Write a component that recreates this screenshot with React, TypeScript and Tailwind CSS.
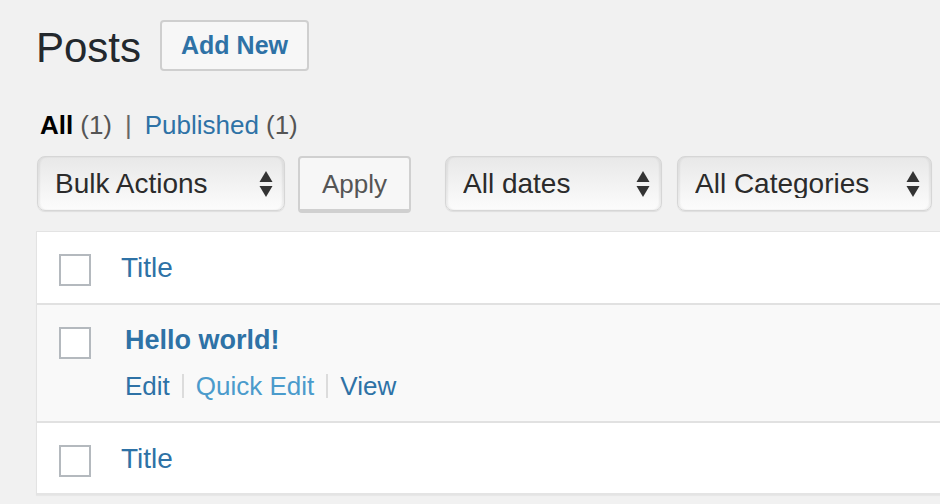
import type { ReactNode } from "react";

const FONT = { fontFamily: '"Liberation Sans", Arial, sans-serif' };

function Arrows() {
  return (
    <svg width="14" height="26" viewBox="0 0 14 26" className="pointer-events-none absolute right-[12px] top-1/2 -translate-y-1/2">
      <path d="M7 0 L13.5 11 L0.5 11 Z" fill="#333" />
      <path d="M7 26 L13.5 15 L0.5 15 Z" fill="#333" />
    </svg>
  );
}

function NativeSelect({ width, label }: { width: string; label: string }) {
  return (
    <div className={`relative h-[55px] ${width}`}>
      <select
        defaultValue={label}
        className="h-full w-full appearance-none rounded-[8px] border border-[#d6d6d6] bg-linear-to-b from-[#e8e8e8] via-[#f2f2f2] to-[#fcfcfc] pl-[17px] pr-[36px] text-[28px] leading-none text-[#2b2b2b] shadow-[inset_2px_0_2px_rgba(0,0,0,0.06),inset_-2px_0_2px_rgba(0,0,0,0.06),0_1px_1px_rgba(0,0,0,0.08)] outline-none"
        style={FONT}
      >
        <option value={label}>{label}</option>
      </select>
      <Arrows />
    </div>
  );
}

function Checkbox() {
  return (
    <input
      type="checkbox"
      className="h-[32px] w-[32px] shrink-0 appearance-none border-2 border-[#b4b9be] bg-white"
    />
  );
}

function Row({ children, className }: { children: ReactNode; className: string }) {
  return <div className={`flex items-start pl-[22px] ${className}`}>{children}</div>;
}

export default function App() {
  return (
    <div className="h-[504px] w-full overflow-hidden bg-[#f1f1f1]" style={FONT}>
      <div className="flex items-start gap-[19px] pl-[36px] pt-[20px]">
        <h1 className="mt-[7px] text-[42px] font-normal leading-none text-[#23282d]">Posts</h1>
        <button className="flex h-[51px] items-center rounded-[4px] border-2 border-[#cfcfcf] bg-[#f7f7f7] px-[19px] text-[25px] font-bold leading-none text-[#2e72a6]">
          Add New
        </button>
      </div>

      <ul className="mt-[41px] flex items-center pl-[40px] text-[26px] leading-none text-[#555]">
        <li>
          <span className="font-bold text-black">All</span>
          <span className="ml-[7px]">(1)</span>
        </li>
        <li className="mx-[13px] text-[#666]">|</li>
        <li>
          <a className="text-[#2e72a6]">Published</a>
          <span className="ml-[7px]">(1)</span>
        </li>
      </ul>

      <div className="mt-[18px] flex items-start pl-[37px]">
        <NativeSelect width="w-[248px]" label="Bulk Actions" />
        <button className="ml-[13px] h-[57px] w-[113px] rounded-[4px] border-2 border-[#d0d0d0] border-b-[4px] bg-[#f7f7f7] text-[26px] leading-none text-[#555]">
          Apply
        </button>
        <NativeSelect width="ml-[34px] w-[217px]" label="All dates" />
        <NativeSelect width="ml-[15px] w-[255px]" label="All Categories" />
      </div>

      <div className="ml-[36px] mt-[18px] border-l border-t border-[#e3e3e3] bg-white shadow-[0_1px_1px_rgba(0,0,0,0.04)]">
        <Row className="h-[71px] pt-[22px]">
          <Checkbox />
          <a className="ml-[30px] text-[28px] leading-none text-[#2e72a6]">Title</a>
        </Row>
        <Row className="h-[120px] border-y-2 border-[#e1e1e1] bg-[#f9f9f9] pt-[22px]">
          <Checkbox />
          <div className="ml-[34px] flex flex-col">
            <a className="text-[27px] font-bold leading-none text-[#2e72a6]">Hello world!</a>
            <div className="mt-[19px] flex items-center text-[26px] leading-none">
              <a className="text-[#2e72a6]">Edit</a>
              <span className="mx-[12px] h-[24px] w-[2px] bg-[#dcdcdc]" />
              <a className="text-[#4b9bcc]">Quick Edit</a>
              <span className="mx-[12px] h-[24px] w-[2px] bg-[#dcdcdc]" />
              <a className="text-[#2e72a6]">View</a>
            </div>
          </div>
        </Row>
        <Row className="h-[72px] border-b-2 border-[#e4e4e4] pt-[22px]">
          <Checkbox />
          <a className="ml-[30px] text-[28px] leading-none text-[#2e72a6]">Title</a>
        </Row>
      </div>
    </div>
  );
}
